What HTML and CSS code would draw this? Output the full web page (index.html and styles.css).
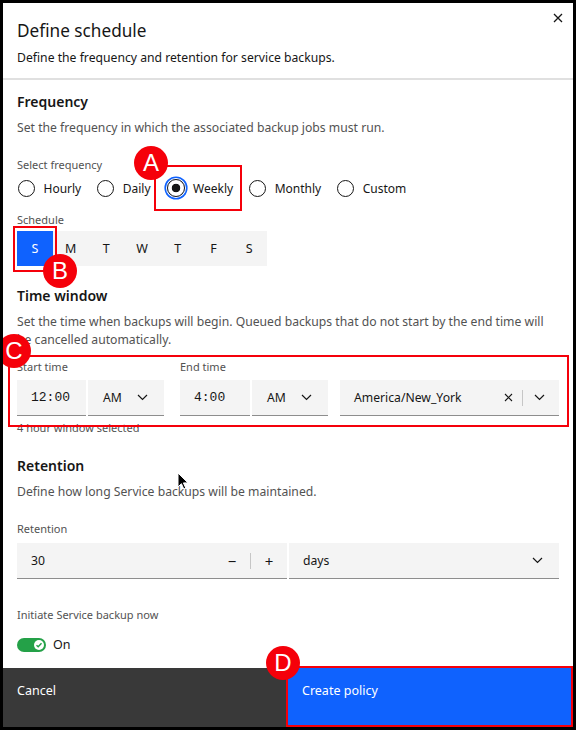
FILE: index.html
```html
<!DOCTYPE html>
<html lang="en">
<head>
<meta charset="utf-8">
<title>Define schedule</title>
<link rel="stylesheet" href="styles.css">
</head>
<body>
<div class="modal">
  <header class="head">
    <h1 class="title">Define schedule</h1>
    <p class="subtitle">Define the frequency and retention for service backups.</p>
  </header>
  <span class="close"><svg width="10" height="10" viewBox="0 0 10 10"><path d="M1 1L9 9M9 1L1 9" stroke="#161616" stroke-width="1.3" fill="none"/></svg></span>

  <div class="content">
    <h2 class="h">Frequency</h2>
    <p class="desc">Set the frequency in which the associated backup jobs must run.</p>
    <div class="label lbl-freq">Select frequency</div>
    <div class="radios">
      <label class="radio"><span class="circle"></span>Hourly</label>
      <label class="radio"><span class="circle"></span>Daily</label>
      <label class="radio"><span class="circle on"></span>Weekly</label>
      <label class="radio"><span class="circle"></span>Monthly</label>
      <label class="radio"><span class="circle"></span>Custom</label>
    </div>
    <div class="label lbl-sched">Schedule</div>
    <div class="days">
      <span class="day sel">S</span><span class="day">M</span><span class="day">T</span><span class="day">W</span><span class="day">T</span><span class="day">F</span><span class="day">S</span>
    </div>

    <h2 class="h h-time">Time window</h2>
    <p class="desc">Set the time when backups will begin. Queued backups that do not start by the end time will be cancelled automatically.</p>
    <div class="timerow">
      <div class="tgroup">
        <div class="label">Start time</div>
        <div class="tfields">
          <div class="field time t-start">12:00</div>
          <div class="field sel-field ampm">AM<svg class="chev" width="11" height="7" viewBox="0 0 11 7"><path d="M1 1l4.5 4.5L10 1" stroke="#161616" stroke-width="1.2" fill="none"/></svg></div>
        </div>
      </div>
      <div class="tgroup g-end">
        <div class="label">End time</div>
        <div class="tfields">
          <div class="field time t-end">4:00</div>
          <div class="field sel-field ampm">AM<svg class="chev" width="11" height="7" viewBox="0 0 11 7"><path d="M1 1l4.5 4.5L10 1" stroke="#161616" stroke-width="1.2" fill="none"/></svg></div>
        </div>
      </div>
      <div class="field tz">
        <span class="tz-text">America/New_York</span>
        <svg class="tz-x" width="9" height="9" viewBox="0 0 9 9"><path d="M1 1l7 7M8 1L1 8" stroke="#161616" stroke-width="1.1" fill="none"/></svg>
        <span class="vdiv"></span>
        <svg class="chev" width="11" height="7" viewBox="0 0 11 7"><path d="M1 1l4.5 4.5L10 1" stroke="#161616" stroke-width="1.2" fill="none"/></svg>
      </div>
    </div>
    <div class="helper">4 hour window selected</div>

    <h2 class="h h-ret">Retention</h2>
    <p class="desc">Define how long Service backups will be maintained.</p>
    <div class="label lbl-ret">Retention</div>
    <div class="retrow">
      <div class="field num">
        <span class="num-val">30</span>
        <span class="step">&minus;</span>
        <span class="vdiv"></span>
        <span class="step">+</span>
      </div>
      <div class="field sel-field days-sel">days<svg class="chev" width="11" height="7" viewBox="0 0 11 7"><path d="M1 1l4.5 4.5L10 1" stroke="#161616" stroke-width="1.2" fill="none"/></svg></div>
    </div>

    <div class="label lbl-init">Initiate Service backup now</div>
    <div class="toggle-row">
      <span class="toggle"><span class="knob"><svg width="8" height="8" viewBox="0 0 8 8"><path d="M1.5 4.2l1.7 1.6L6.5 2.3" stroke="#24a148" stroke-width="1.4" fill="none"/></svg></span></span>
      <span class="toggle-text">On</span>
    </div>
  </div>

  <footer class="foot">
    <div class="btn cancel">Cancel</div>
    <div class="btn primary">Create policy</div>
  </footer>

  <div class="ann-box box-a"></div>
  <div class="ann-box box-b"></div>
  <div class="ann-box box-c"></div>
  <div class="ann-box box-d"></div>
  <div class="ann-dot dot-a">A</div>
  <div class="ann-dot dot-b">B</div>
  <div class="ann-dot dot-c">C</div>
  <div class="ann-dot dot-d">D</div>

  <svg class="cursor" width="12" height="18" viewBox="0 0 12 18"><path d="M1 1v14l3.4-3.3 2.4 5.3 2-.9-2.4-5.2H11z" fill="#000" stroke="#fff" stroke-width="1"/></svg>
</div>
</body>
</html>
```

FILE: styles.css
```css
* { box-sizing: border-box; margin: 0; padding: 0; }
html, body { width: 576px; height: 730px; overflow: hidden; background: #000; }
body { padding: 3px; font-family: "Noto Sans", sans-serif; color: #161616; }

.modal {
  position: relative;
  width: 570px;
  height: 724px;
  background: #fff;
  display: flex;
  flex-direction: column;
  overflow: hidden;
}

.head {
  padding: 15px 14px 11px 14px;
  border-bottom: 2px solid #e0e0e0;
}
.title { font-size: 17.2px; font-weight: 400; line-height: 26px; }
.subtitle { font-size: 12.2px; line-height: 18px; margin-top: 5px; }
.close { position: absolute; left: 550px; top: 10px; width: 10px; height: 10px; }
.close svg { display: block; }

.content { flex: 1; padding: 13px 14px 0; }
.h { font-size: 14px; font-weight: 600; line-height: 18px; }
.desc { font-size: 12.2px; line-height: 18px; color: #525252; margin-top: 8px; }
.label { font-size: 11px; line-height: 16px; color: #525252; }
.lbl-freq { margin-top: 20px; }

.radios { display: flex; gap: 16px; margin-top: 5px; height: 20px; align-items: center; padding-left: 1px; }
.radio { display: flex; align-items: center; gap: 8.5px; font-size: 12px; color: #161616; }
.circle { width: 17px; height: 17px; border: 1px solid #161616; border-radius: 50%; }
.circle.on {
  width: 18px; height: 18px;
  background: radial-gradient(circle, #161616 0 4px, transparent 4.6px);
  box-shadow: 0 0 0 1px #fff, 0 0 0 2.6px #0f62fe;
}

.lbl-sched { margin-top: 14px; }
.days { display: flex; width: 250px; height: 35px; background: #f4f4f4; margin-top: 3px; }
.day { flex: 1; display: flex; align-items: center; justify-content: center; font-size: 12.5px; }
.day.sel { background: #0f62fe; color: #fff; }

.h-time { margin-top: 21px; }
.timerow { display: flex; align-items: flex-end; margin-top: 10px; }
.tgroup { display: flex; flex-direction: column; }
.g-end { margin-left: 16px; }
.tfields { display: flex; gap: 2px; margin-top: 5px; }
.field {
  height: 36px;
  background: #f4f4f4;
  border-bottom: 1px solid #8d8d8d;
  display: flex;
  align-items: center;
  font-size: 12.2px;
  padding: 0 14px;
}
.time { font-family: "Liberation Mono", monospace; font-size: 13px; }
.t-start { width: 69px; }
.t-end { width: 70px; }
.sel-field { justify-content: space-between; }
.ampm { width: 76px; padding-left: 15px; padding-right: 16px; }
.tz { width: 219px; margin-left: 12px; }
.tz-text { flex: 1; }
.tz-x { margin-right: 9px; }
.vdiv { width: 1px; height: 16px; background: #c6c6c6; }
.tz .chev { margin-left: 11px; }

.helper { font-size: 11px; line-height: 16px; color: #525252; margin-top: 4px; }

.h-ret { margin-top: 21px; }
.lbl-ret { margin-top: 20px; }
.retrow { display: flex; gap: 2px; margin-top: 6px; }
.num { width: 270px; padding-right: 0; }
.num-val { flex: 1; }
.step { width: 36px; text-align: center; font-size: 15px; }
.days-sel { width: 270px; padding-right: 16px; }

.lbl-init { margin-top: 28px; }
.toggle-row { display: flex; align-items: center; gap: 7px; margin-top: 13px; }
.toggle {
  width: 29px; height: 14px; border-radius: 7px; background: #24a148;
  display: flex; align-items: center; justify-content: flex-end; padding-right: 2px;
}
.knob { width: 10px; height: 10px; border-radius: 50%; background: #fff; display: flex; align-items: center; justify-content: center; }
.knob svg { display: block; }
.toggle-text { font-size: 12.5px; line-height: 18px; }

.foot { display: flex; height: 59px; }
.btn { flex: 1; color: #fff; font-size: 12.5px; line-height: 18px; padding: 14px 14px 0; }
.cancel { background: #393939; }
.primary { background: #0f62fe; }

.ann-box { position: absolute; border: 2px solid #f5000a; }
.box-a { left: 151px; top: 162px; width: 88px; height: 46px; }
.box-b { left: 10px; top: 223px; width: 44px; height: 46px; }
.box-c { left: 5px; top: 352px; width: 561px; height: 72px; }
.box-d { left: 283px; top: 663px; width: 287px; height: 61px; }

.ann-dot {
  position: absolute;
  width: 34px; height: 34px; border-radius: 50%;
  background: #f5000a; color: #fff;
  font-family: "Liberation Sans", sans-serif; font-size: 24px; line-height: 34px; text-align: center;
}
.dot-a { left: 131px; top: 143px; }
.dot-b { left: 40px; top: 251px; }
.dot-c { left: -6px; top: 331px; }
.dot-d { left: 263px; top: 643px; }

.cursor { position: absolute; left: 174px; top: 469px; }
```
